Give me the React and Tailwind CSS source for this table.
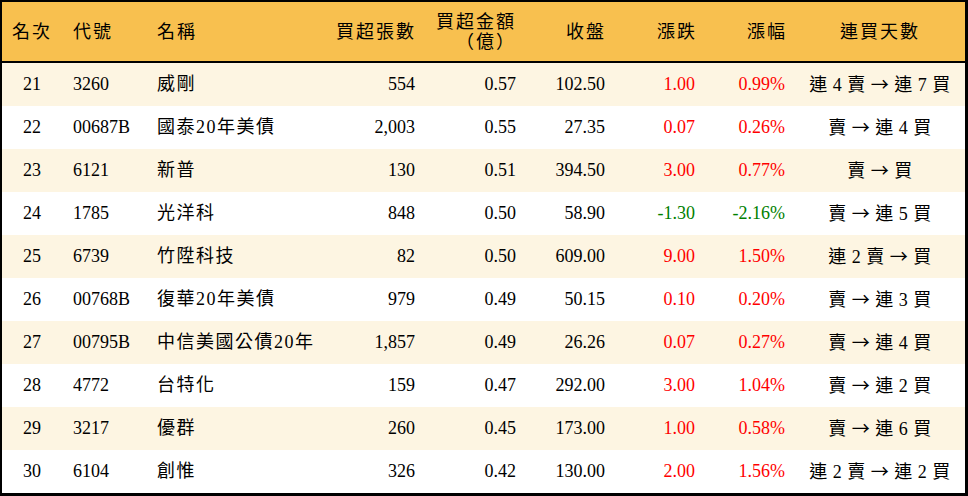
import React from "react";

const rows = [
  ["21", "3260", "威剛", "554", "0.57", "102.50", "1.00", "0.99%", "連 4 賣 → 連 7 買"],
  ["22", "00687B", "國泰20年美債", "2,003", "0.55", "27.35", "0.07", "0.26%", "賣 → 連 4 買"],
  ["23", "6121", "新普", "130", "0.51", "394.50", "3.00", "0.77%", "賣 → 買"],
  ["24", "1785", "光洋科", "848", "0.50", "58.90", "-1.30", "-2.16%", "賣 → 連 5 買"],
  ["25", "6739", "竹陞科技", "82", "0.50", "609.00", "9.00", "1.50%", "連 2 賣 → 買"],
  ["26", "00768B", "復華20年美債", "979", "0.49", "50.15", "0.10", "0.20%", "賣 → 連 3 買"],
  ["27", "00795B", "中信美國公債20年", "1,857", "0.49", "26.26", "0.07", "0.27%", "賣 → 連 4 買"],
  ["28", "4772", "台特化", "159", "0.47", "292.00", "3.00", "1.04%", "賣 → 連 2 買"],
  ["29", "3217", "優群", "260", "0.45", "173.00", "1.00", "0.58%", "賣 → 連 6 買"],
  ["30", "6104", "創惟", "326", "0.42", "130.00", "2.00", "1.56%", "連 2 賣 → 連 2 買"],
];

const grid = "grid grid-cols-[60px_85px_178px_100px_101px_89px_90px_90px_170px]";

// split "連 4 賣 → 連 7 買" so the arrow gets the CJK font's long arrow
function Streak({ text }) {
  const [left, right] = text.split(" → ");
  return (
    <div className="text-center whitespace-pre tracking-[0.5px]">
      {left}{" "}
      <span style={{ fontFamily: '"Noto Sans CJK TC", sans-serif' }}>→</span>{" "}
      {right}
    </div>
  );
}

export default function App() {
  return (
    <div
      className="w-[968px] h-[496px] bg-black pt-[2px] pl-[2px] pr-[3px] pb-[3px] text-[18px] text-black"
      style={{ fontFamily: '"Liberation Serif", "Noto Sans CJK TC", serif' }}
    >
      <div className={`${grid} h-[59px] bg-[#f8c04f] items-center tracking-[2px] leading-[20px]`}>
        <div className="text-center">名次</div>
        <div className="pl-[11px]">代號</div>
        <div className="pl-[10px]">名稱</div>
        <div className="text-right pr-[9px]">買超張數</div>
        <div className="text-right pr-[10px]">
          買超金額
          <br />
          （億）
        </div>
        <div className="text-right pr-[9px]">收盤</div>
        <div className="text-right pr-[8px]">漲跌</div>
        <div className="text-right pr-[8px]">漲幅</div>
        <div className="text-center">連買天數</div>
      </div>
      <div className="h-[2px] bg-black" />
      {rows.map((r, i) => {
        const down = r[6].startsWith("-");
        const color = down ? "text-[#008000]" : "text-[#ff0000]";
        return (
          <div
            key={r[0]}
            className={`${grid} h-[43px] items-center ${i % 2 === 0 ? "bg-[#fdf5e2]" : "bg-white"}`}
          >
            <div className="text-center">{r[0]}</div>
            <div className="pl-[11px]">{r[1]}</div>
            <div className="pl-[10px] tracking-[1.5px]">{r[2]}</div>
            <div className="text-right pr-[10px]">{r[3]}</div>
            <div className="text-right pr-[10px]">{r[4]}</div>
            <div className="text-right pr-[10px]">{r[5]}</div>
            <div className={`text-right pr-[10px] ${color}`}>{r[6]}</div>
            <div className={`text-right pr-[10px] ${color}`}>{r[7]}</div>
            <Streak text={r[8]} />
          </div>
        );
      })}
    </div>
  );
}
